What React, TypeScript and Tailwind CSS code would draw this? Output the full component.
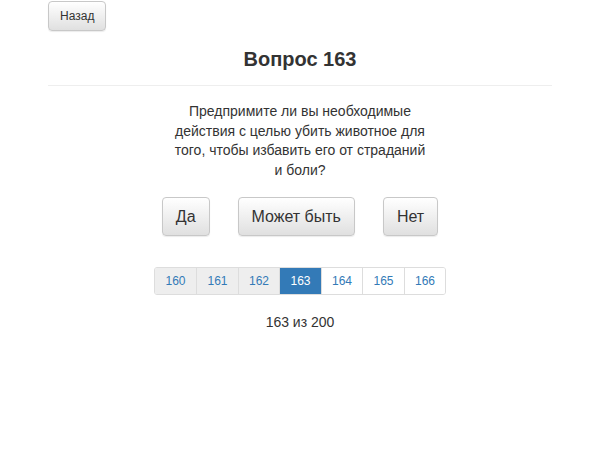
const btn =
  "rounded-[4px] border border-[#c8c8c8] bg-gradient-to-b from-white to-[#e0e0e0] text-[#333] shadow-[0_1px_1px_rgba(0,0,0,0.08)]";

const pages = [160, 161, 162, 163, 164, 165, 166];

export default function App() {
  return (
    <div className="min-h-[459px] bg-white font-['Liberation_Sans',Arial,sans-serif] text-[#333]">
      <div className="mx-auto w-[504px] pt-[1px]">
        <button className={`${btn} h-[30px] px-[11px] text-[12px]`}>Назад</button>

        <h3 className="mt-[13px] text-center text-[20px] font-bold leading-[30px] text-[#333]">
          Вопрос 163
        </h3>
        <div className="mt-[11px] border-t border-[#eee]" />

        <p className="mx-auto mt-[16px] w-[262px] text-center text-[14px] leading-[19.5px]">
          Предпримите ли вы необходимые действия с целью убить животное для того, чтобы избавить его от страданий и боли?
        </p>

        <div className="mt-[17px] flex justify-center gap-[28px]">
          <button className={`${btn} h-[39px] px-[13px] text-[16px]`}>Да</button>
          <button className={`${btn} h-[39px] px-[13px] text-[16px]`}>Может быть</button>
          <button className={`${btn} h-[39px] px-[13px] text-[16px]`}>Нет</button>
        </div>

        <div className="mt-[31px] flex justify-center">
          <div className="flex overflow-hidden rounded-[3px] border border-[#ddd]">
            {pages.map((p, i) => {
              const active = p === 163;
              const past = p < 163;
              return (
                <span
                  key={p}
                  className={
                    "flex h-[26px] w-[41.5px] items-center justify-center text-[12px] " +
                    (i > 0 ? "border-l border-[#ddd] " : "") +
                    (active
                      ? "bg-[#337ab7] text-white border-[#337ab7]"
                      : past
                      ? "bg-[#eee] text-[#337ab7]"
                      : "bg-white text-[#337ab7]")
                  }
                >
                  {p}
                </span>
              );
            })}
          </div>
        </div>

        <p className="mt-[17px] text-center text-[14px] leading-[20px]">163 из 200</p>
      </div>
    </div>
  );
}
